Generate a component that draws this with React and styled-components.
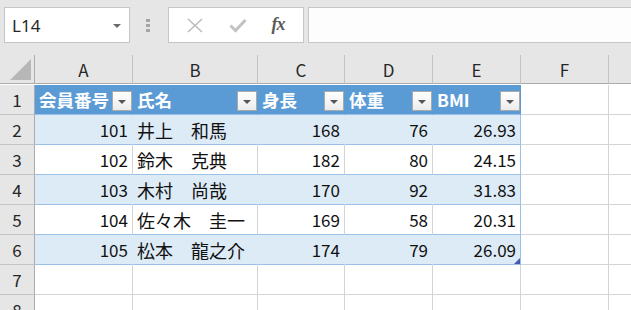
import styled, { createGlobalStyle } from "styled-components";

const GlobalStyle = createGlobalStyle`
  html, body {
    margin: 0;
    padding: 0;
    background: #ffffff;
  }
  * {
    box-sizing: border-box;
  }
`;

const columns = ["A", "B", "C", "D", "E", "F", "G"];
const widths = "35px 98px 125px 87px 88px 88px 88px 88px";

const headers = ["会員番号", "氏名", "身長", "体重", "BMI"];

const members = [
  ["101", "井上　和馬", "168", "76", "26.93"],
  ["102", "鈴木　克典", "182", "80", "24.15"],
  ["103", "木村　尚哉", "170", "92", "31.83"],
  ["104", "佐々木　圭一", "169", "58", "20.31"],
  ["105", "松本　龍之介", "174", "79", "26.09"],
];

const BLUE_HEAD = "#5b9bd5";
const BLUE_BAND = "#ddebf7";
const BLUE_LINE = "#9bc2e6";
const GRID = "#d4d4d4";

const Page = styled.div`
  width: 100%;
  height: 310px;
  overflow: hidden;
  background: #e6e6e6;
  font-family: "Noto Sans CJK JP", "Noto Sans", sans-serif;
`;

/* ---------- formula bar ---------- */

const Toolbar = styled.div`
  display: flex;
  height: 55px;
  padding: 7px 0 12px 4px;
`;

const NameBox = styled.div`
  width: 126px;
  display: flex;
  align-items: center;
  justify-content: space-between;
  padding: 0 8px 0 7px;
  background: #fff;
  border: 1px solid #c6c6c6;
  font-family: "Noto Sans", sans-serif;
  font-size: 17px;
  color: #262626;
`;

const Caret = styled.span`
  width: 0;
  height: 0;
  border-left: 4px solid transparent;
  border-right: 4px solid transparent;
  border-top: 4px solid #6a6a6a;
  margin-top: 1px;
`;

const Grip = styled.div`
  width: 38px;
  display: flex;
  flex-direction: column;
  align-items: center;
  justify-content: center;
  gap: 2px;
  padding-right: 2px;

  & span {
    width: 4px;
    height: 3px;
    background: #a5a5a5;
  }
`;

const FormulaButtons = styled.div`
  width: 136px;
  display: flex;
  align-items: center;
  justify-content: space-around;
  padding: 0 6px 0 4px;
  background: #fff;
  border: 1px solid #c6c6c6;
`;

const Fx = styled.span`
  font-family: "Liberation Serif", serif;
  font-style: italic;
  font-weight: bold;
  font-size: 18px;
  color: #5a5a5a;
  letter-spacing: -1px;
  margin-top: -2px;
`;

const FormulaInput = styled.div`
  flex: 1;
  margin-left: 4px;
  background: #fdfdfd;
  border: 1px solid #c6c6c6;
  border-right: none;
`;

/* ---------- sheet ---------- */

const Sheet = styled.div`
  display: grid;
  grid-template-columns: ${widths};
  grid-auto-rows: 30px;
  width: max-content;
  background: #fff;
`;

const Corner = styled.div`
  height: 29px;
  display: flex;
  align-items: flex-end;
  justify-content: flex-end;
  padding: 0 3px 3px 0;
  background: #e6e6e6;
  border-right: 1px solid #ababab;
  border-bottom: 1px solid #ababab;

  &::after {
    content: "";
    width: 0;
    height: 0;
    border-left: 21px solid transparent;
    border-bottom: 21px solid #b7b7b7;
  }
`;

const ColHead = styled.div`
  height: 29px;
  display: flex;
  align-items: center;
  justify-content: center;
  background: #e6e6e6;
  border-right: 1px solid #c2c2c2;
  border-bottom: 1px solid #ababab;
  font-size: 17px;
  color: #262626;
`;

const RowHead = styled.div`
  display: flex;
  align-items: center;
  justify-content: center;
  background: #e6e6e6;
  border-right: 1px solid #ababab;
  border-bottom: 1px solid #c4c4c4;
  font-size: 17px;
  color: #262626;
`;

const bandBg = { head: BLUE_HEAD, blue: BLUE_BAND, white: "#fff" };

const rightLine = ({ $band, $last }) => {
  if (!$band) return GRID;
  if ($last) return $band === "head" ? BLUE_HEAD : BLUE_LINE;
  if ($band === "white") return GRID;
  return bandBg[$band];
};

const Cell = styled.div`
  position: relative;
  display: flex;
  align-items: center;
  justify-content: ${({ $text }) => ($text ? "flex-start" : "flex-end")};
  padding: 0 4px 0 4px;
  background: ${({ $band }) => ($band ? bandBg[$band] : "#fff")};
  border-right: 1px solid ${rightLine};
  border-bottom: 1px solid ${({ $band }) => ($band ? BLUE_LINE : GRID)};
  font-size: ${({ $text }) => ($text ? "18px" : "17px")};
  color: #111;
  white-space: nowrap;
`;

const HeadCell = styled(Cell)`
  justify-content: space-between;
  padding: 0 0 0 4px;
  font-size: 17.5px;
  font-weight: bold;
  color: #fff;
`;

const FilterButton = styled.span`
  width: 20px;
  height: 20px;
  margin-top: 3px;
  display: flex;
  align-items: center;
  justify-content: center;
  background: linear-gradient(#ffffff, #ececec);
  border: 1px solid #a9a9a9;

  &::after {
    content: "";
    width: 0;
    height: 0;
    border-left: 4px solid transparent;
    border-right: 4px solid transparent;
    border-top: 4px solid #555;
    margin-top: 1px;
  }
`;

const ResizeHandle = styled.span`
  position: absolute;
  right: 0;
  bottom: 0;
  width: 0;
  height: 0;
  border-left: 6px solid transparent;
  border-bottom: 6px solid #4658b5;
`;

function FormulaBar() {
  return (
    <Toolbar>
      <NameBox>
        L14
        <Caret />
      </NameBox>
      <Grip>
        <span />
        <span />
        <span />
      </Grip>
      <FormulaButtons>
        <svg width="18" height="15" viewBox="0 0 18 15">
          <path d="M2 1 L16 14 M16 1 L2 14" stroke="#bcbcbc" strokeWidth="1.6" fill="none" />
        </svg>
        <svg width="18" height="15" viewBox="0 0 18 15">
          <path d="M1.5 7.5 L6.5 12.5 L16.5 2" stroke="#c2c2c2" strokeWidth="3" fill="none" />
        </svg>
        <Fx>fx</Fx>
      </FormulaButtons>
      <FormulaInput />
    </Toolbar>
  );
}

export default function App() {
  const extra = [7, 8];
  return (
    <>
      <GlobalStyle />
      <Page>
        <FormulaBar />
        <Sheet>
          <Corner />
          {columns.map((c) => (
            <ColHead key={c}>{c}</ColHead>
          ))}

          <RowHead>1</RowHead>
          {headers.map((h, i) => (
            <HeadCell key={h} $band="head" $last={i === headers.length - 1}>
              {h}
              <FilterButton />
            </HeadCell>
          ))}
          <Cell />
          <Cell />

          {members.map((row, r) => {
            const band = r % 2 === 0 ? "blue" : "white";
            const lastRow = r === members.length - 1;
            return [
              <RowHead key={`h${r}`}>{r + 2}</RowHead>,
              ...row.map((v, i) => (
                <Cell
                  key={`${r}-${i}`}
                  $band={band}
                  $text={i === 1}
                  $last={i === row.length - 1}
                >
                  {v}
                  {lastRow && i === row.length - 1 && <ResizeHandle />}
                </Cell>
              )),
              <Cell key={`f${r}`} />,
              <Cell key={`g${r}`} />,
            ];
          })}

          {extra.map((n) => [
            <RowHead key={`h${n}`}>{n}</RowHead>,
            ...columns.map((c) => <Cell key={`${n}${c}`} />),
          ])}
        </Sheet>
      </Page>
    </>
  );
}
